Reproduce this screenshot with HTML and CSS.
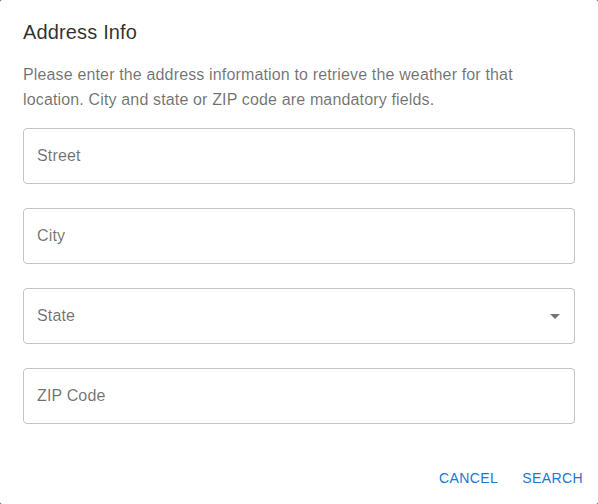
FILE: index.html
```html
<!DOCTYPE html>
<html>
<head>
<meta charset="utf-8">
<link rel="stylesheet" href="styles.css">
</head>
<body>
<div class="dialog">
  <h2 class="title">Address Info</h2>
  <div class="content">
    <p class="text">Please enter the address information to retrieve the weather for that location. City and state or ZIP code are mandatory fields.</p>
    <div class="field"><span class="label">Street</span></div>
    <div class="field"><span class="label">City</span></div>
    <div class="field select"><span class="label">State</span>
      <svg class="arrow" viewBox="0 0 24 24" width="24" height="24"><path d="M7 10l5 5 5-5z"/></svg>
    </div>
    <div class="field"><span class="label">ZIP Code</span></div>
  </div>
  <div class="actions">
    <button class="btn">Cancel</button>
    <button class="btn">Search</button>
  </div>
</div>
</body>
</html>
```
FILE: styles.css
```css
html, body {
  margin: 0;
  padding: 0;
  background: #4a4040;
}
body {
  font-family: "Liberation Sans", Arial, sans-serif;
}
.dialog {
  width: 598px;
  height: 504px;
  background: #fff;
  border-radius: 2px;
  box-sizing: border-box;
  display: flex;
  flex-direction: column;
}
.title {
  margin: 0;
  padding: 16px 23px;
  font-size: 20px;
  font-weight: 400;
  line-height: 32px;
  letter-spacing: 0.15px;
  color: rgba(0,0,0,0.82);
}
.content {
  padding: 0 23px;
  display: flex;
  flex-direction: column;
}
.text {
  margin: -1px 0 0 0;
  font-size: 16px;
  line-height: 24.5px;
  letter-spacing: 0.15px;
  color: rgba(0,0,0,0.56);
}
.field {
  margin-top: 24px;
  height: 56px;
  border: 1px solid rgba(0,0,0,0.23);
  border-radius: 4px;
  box-sizing: border-box;
  display: flex;
  align-items: center;
  padding: 0 13px;
  position: relative;
}
.text + .field {
  margin-top: 16px;
}
.label {
  font-size: 16px;
  letter-spacing: 0.15px;
  color: rgba(0,0,0,0.56);
}
.arrow {
  position: absolute;
  right: 7px;
  top: 15px;
  fill: rgba(0,0,0,0.54);
}
.actions {
  margin-top: auto;
  padding: 8px 7px 8px 8px;
  display: flex;
  justify-content: flex-end;
  gap: 8px;
}
.btn {
  font-family: "Liberation Sans", Arial, sans-serif;
  font-size: 14px;
  text-transform: uppercase;
  letter-spacing: 0.4px;
  color: #1976d2;
  background: none;
  border: none;
  padding: 6px 8px;
  min-width: 64px;
  height: 36px;
  line-height: 24px;
}
```
